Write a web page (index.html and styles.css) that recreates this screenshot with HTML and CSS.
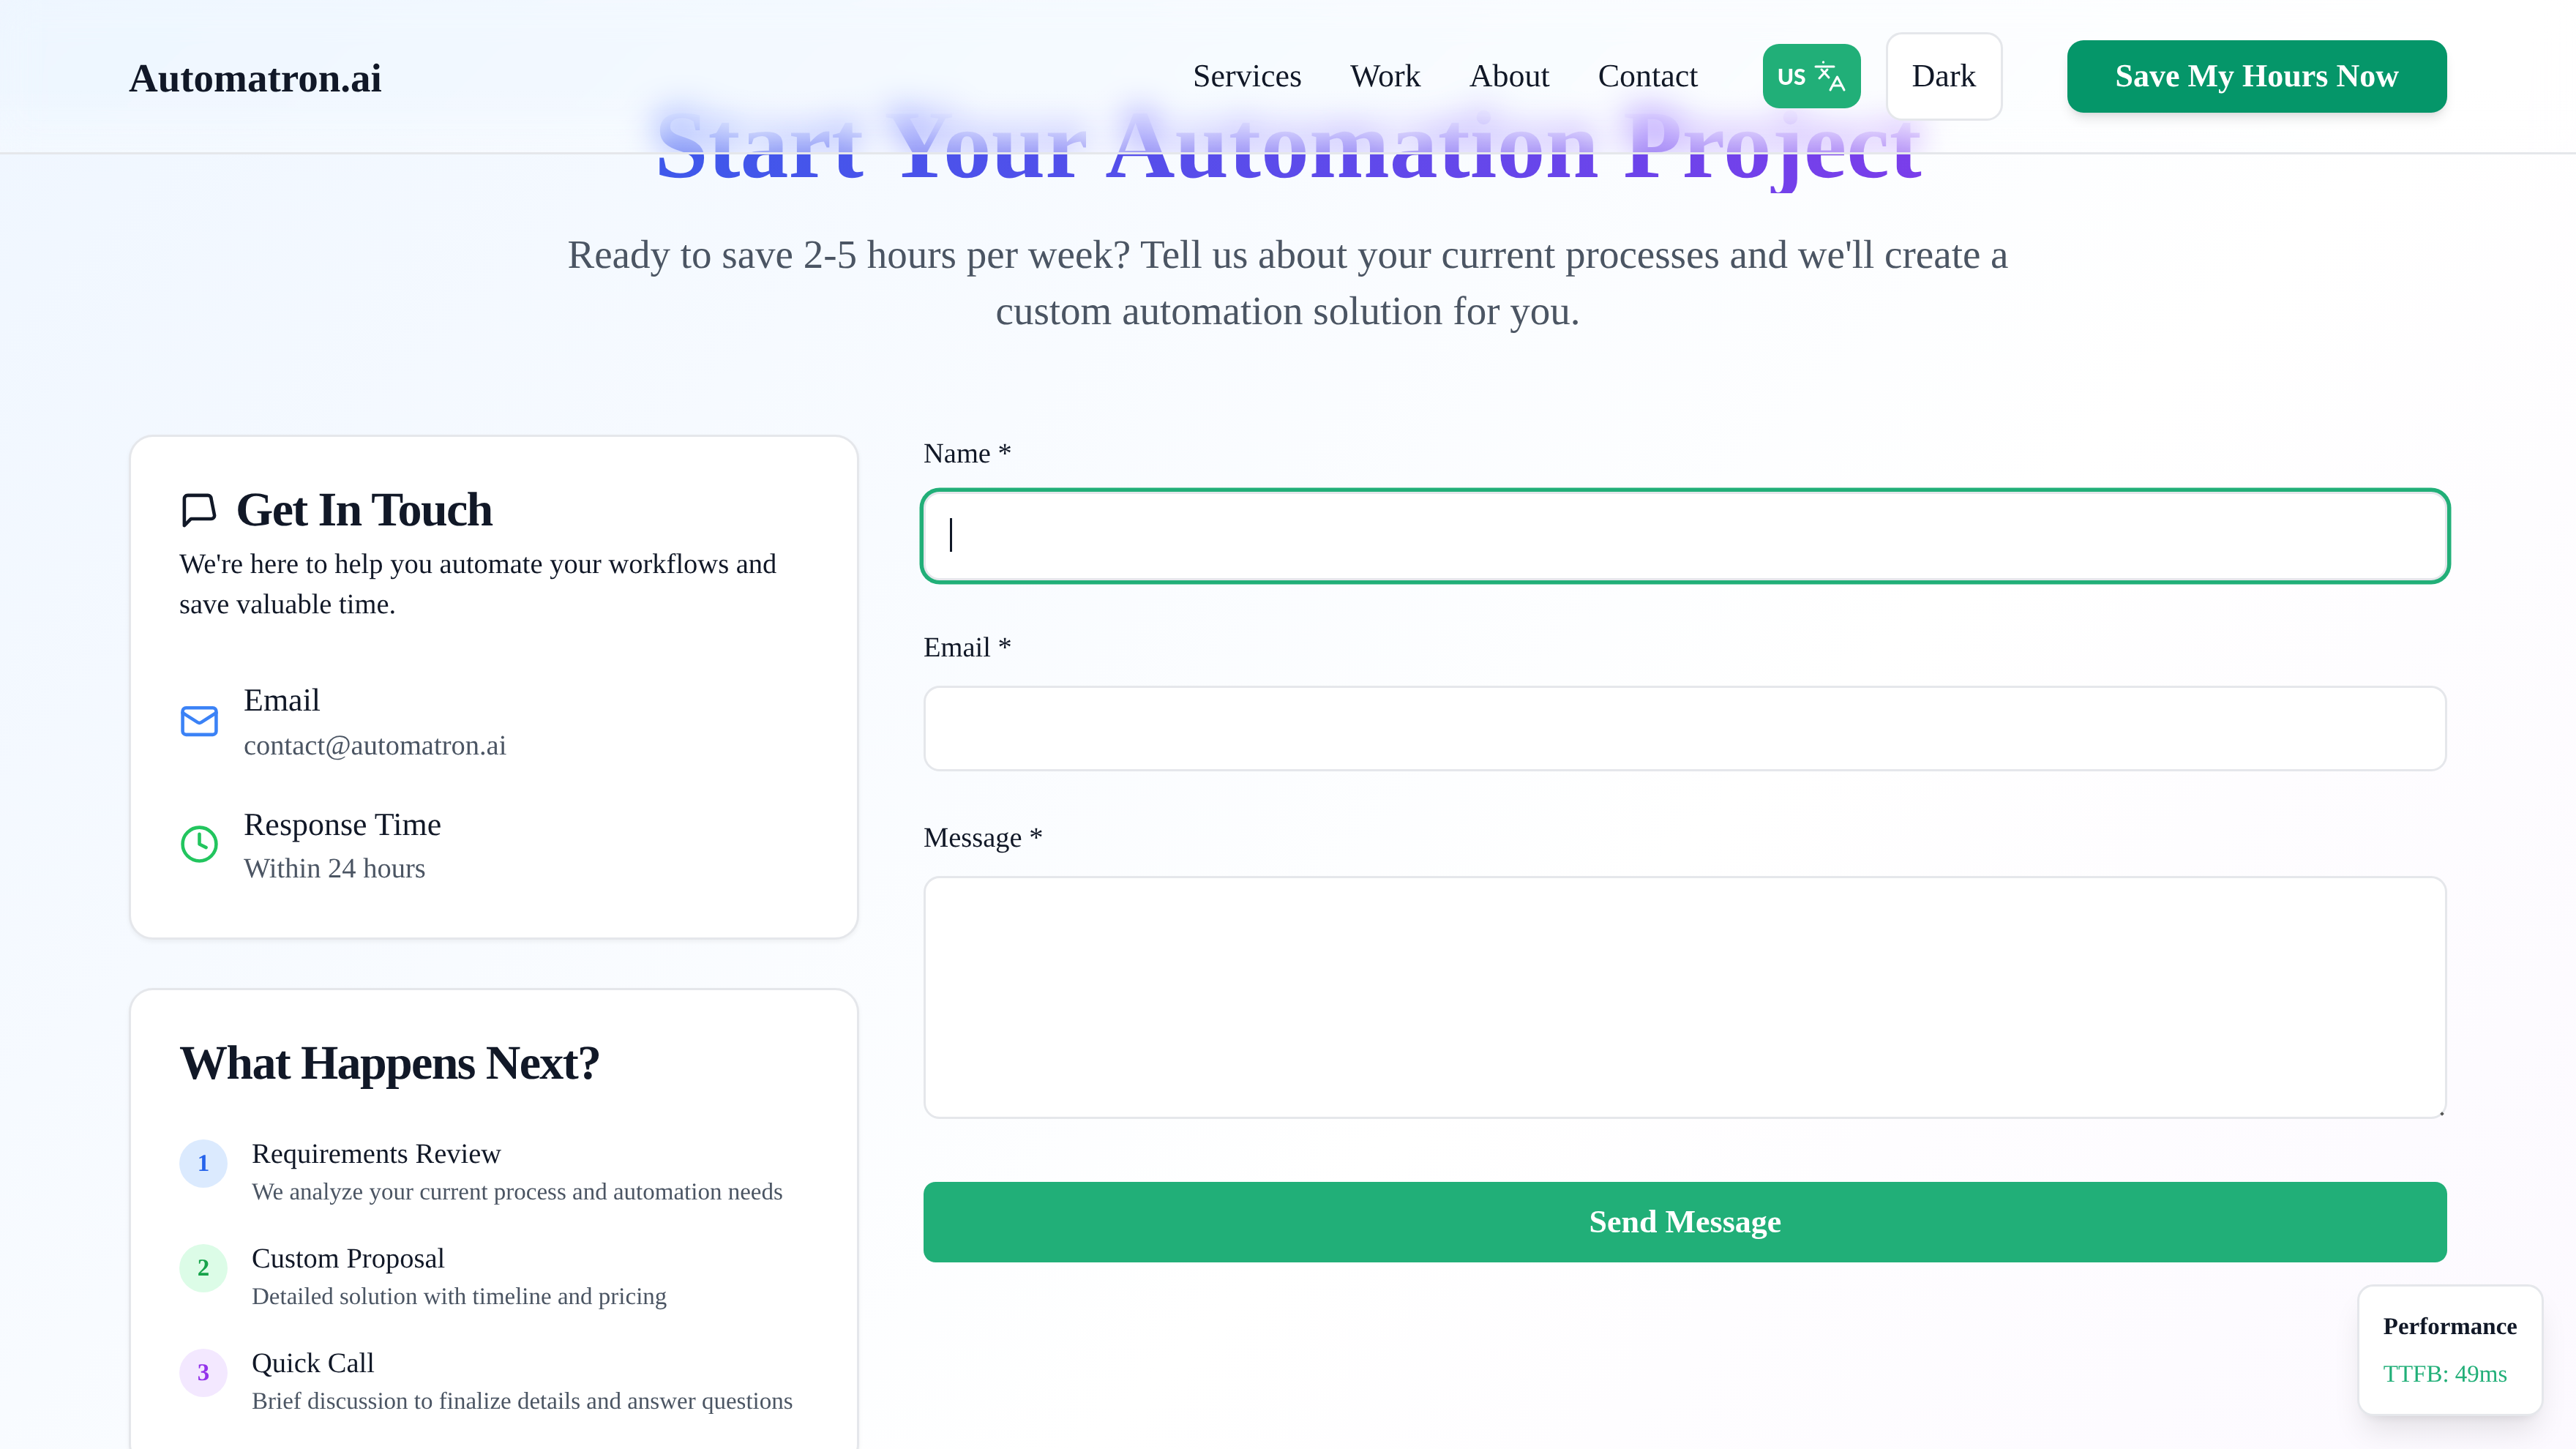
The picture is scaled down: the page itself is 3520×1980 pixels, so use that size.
FILE: index.html
```
<!DOCTYPE html>
<html lang="en">
<head>
<meta charset="utf-8">
<title>Contact - Automatron.ai</title>
<link rel="stylesheet" href="styles.css">
</head>
<body>

<header class="topbar">
  <a class="logo" href="#">Automatron.ai</a>
  <nav class="topnav">
    <a href="#">Services</a>
    <a href="#">Work</a>
    <a href="#">About</a>
    <a href="#">Contact</a>
  </nav>
  <button class="lang-btn" type="button">
    <span class="lang-code">US</span>
    <svg class="lang-icon" viewBox="8 7 44 44" fill="none" stroke="currentColor" stroke-width="3" stroke-linecap="round" stroke-linejoin="round">
      <circle cx="20.5" cy="10" r="1.7" fill="currentColor" stroke="none"/>
      <path d="M10 16h25"/>
      <path d="M18 20l10 11"/>
      <path d="M26 20L15 32"/>
      <path d="M30 48l9.500-18L49 48"/>
      <path d="M33.500 42h12"/>
    </svg>
  </button>
  <button class="theme-btn" type="button">Dark</button>
  <a class="cta-btn" href="#">Save My Hours Now</a>
</header>

<main class="page">
  <section class="hero">
    <h1>Start Your Automation Project</h1>
    <p>Ready to save 2-5 hours per week? Tell us about your current processes and we'll create a custom automation solution for you.</p>
  </section>

  <div class="contact-grid">
    <div class="side">
      <div class="card">
        <h3 class="card-title">
          <svg class="icon" viewBox="0 0 24 24"><path d="M21 15a2 2 0 0 1-2 2H7l-4 4V5a2 2 0 0 1 2-2h12a2 2 0 0 1 2 2z"/></svg>
          Get In Touch
        </h3>
        <p class="card-desc">We're here to help you automate your workflows and save valuable time.</p>
        <div class="info-list">
          <div class="info-row">
            <svg class="icon icon-blue" viewBox="0 0 24 24"><rect x="2" y="4" width="20" height="16" rx="2"/><path d="m22 7-8.970 5.700a1.940 1.940 0 0 1-2.060 0L2 7"/></svg>
            <div>
              <div class="info-name">Email</div>
              <a class="info-value info-link" href="#">contact@automatron.ai</a>
            </div>
          </div>
          <div class="info-row">
            <svg class="icon icon-green" viewBox="0 0 24 24"><circle cx="12" cy="12" r="10"/><path d="M12 6v6l4 2"/></svg>
            <div>
              <div class="info-name">Response Time</div>
              <div class="info-value">Within 24 hours</div>
            </div>
          </div>
        </div>
      </div>

      <div class="card">
        <h3 class="card-title">What Happens Next?</h3>
        <ol class="steps">
          <li class="step">
            <span class="step-num num-blue">1</span>
            <div>
              <div class="step-name">Requirements Review</div>
              <div class="step-desc">We analyze your current process and automation needs</div>
            </div>
          </li>
          <li class="step">
            <span class="step-num num-green">2</span>
            <div>
              <div class="step-name">Custom Proposal</div>
              <div class="step-desc">Detailed solution with timeline and pricing</div>
            </div>
          </li>
          <li class="step">
            <span class="step-num num-purple">3</span>
            <div>
              <div class="step-name">Quick Call</div>
              <div class="step-desc">Brief discussion to finalize details and answer questions</div>
            </div>
          </li>
        </ol>
      </div>
    </div>

    <form class="contact-form">
      <div class="field">
        <label for="name">Name *</label>
        <div class="control is-focused">
          <input id="name" type="text">
          <span class="caret"></span>
        </div>
      </div>
      <div class="field">
        <label for="email">Email *</label>
        <div class="control">
          <input id="email" type="email">
        </div>
      </div>
      <div class="field">
        <label for="message">Message *</label>
        <div class="control control-area">
          <textarea id="message"></textarea>
        </div>
      </div>
      <button class="send-btn" type="button">Send Message</button>
    </form>
  </div>
</main>

<aside class="perf">
  <div class="perf-title">Performance</div>
  <div class="perf-value">TTFB: 49ms</div>
</aside>

</body>
</html>
```

FILE: styles.css
```
* {
  box-sizing: border-box;
}

html, body {
  height: 100%;
  margin: 0;
  overflow: hidden;
}

body {
  font-family: "Liberation Serif", "Times New Roman", serif;
  font-size: 44px;
  line-height: 66px;
  color: #111827;
  text-rendering: geometricPrecision;
  background: linear-gradient(135deg, #eff6ff 0%, #fff 50%, #faf5ff 100%) no-repeat;
  background-size: 100% 3400px;
}

a {
  color: inherit;
  text-decoration: none;
}

button {
  font: inherit;
  color: inherit;
  cursor: pointer;
}

/* top bar */
.topbar {
  position: fixed;
  top: 0;
  left: 0;
  right: 0;
  z-index: 10;
  height: 211px;
  padding: 0 176px;
  display: flex;
  align-items: center;
  border-bottom: 3px solid #e5e7eb;
}

.topbar::before {
  content: "";
  position: absolute;
  inset: 0;
  z-index: -1;
  background: linear-gradient(to bottom, rgba(255, 255, 255, .05) 60%, rgba(255, 255, 255, .3) 100%);
  -webkit-backdrop-filter: blur(24px) saturate(1.25);
  backdrop-filter: blur(24px) saturate(1.25);
  -webkit-mask-image: linear-gradient(to bottom, #000 60%, rgba(0, 0, 0, .92) 100%);
  mask-image: linear-gradient(to bottom, #000 60%, rgba(0, 0, 0, .92) 100%);
}

.logo {
  font-size: 55px;
  font-weight: bold;
  line-height: 77px;
  margin-top: 4px;
  margin-right: auto;
}

.topnav {
  display: flex;
  gap: 66px;
  margin-right: 88px;
}

.lang-btn {
  width: 134px;
  height: 88px;
  padding: 0;
  border: 0;
  border-radius: 22px;
  background: #21af78;
  color: #fff;
  display: flex;
  align-items: center;
  justify-content: center;
  gap: 11px;
}

.lang-code {
  font-family: Lato, "Noto Sans", sans-serif;
  font-size: 30px;
  font-weight: 900;
  line-height: 44px;
}

.lang-icon {
  width: 44px;
  height: 44px;
}

.theme-btn {
  height: 121px;
  margin-left: 34px;
  margin-right: 88px;
  padding: 0 33px;
  border: 3px solid #e5e7eb;
  border-radius: 22px;
  background: #fff;
}

.cta-btn {
  height: 99px;
  padding: 0 66px;
  display: flex;
  align-items: center;
  border-radius: 22px;
  background: #059669;
  color: #fff;
  font-weight: bold;
  box-shadow: 0 11px 16px -3px rgba(0, 0, 0, .1), 0 5px 11px -5px rgba(0, 0, 0, .1);
}

/* page */
.page {
  padding: 0 176px;
}

.hero {
  padding-top: 132px;
  margin-bottom: 131px;
  text-align: center;
}

.hero h1 {
  margin: 0 0 45px;
  font-size: 132px;
  line-height: 132px;
  font-weight: bold;
  background: linear-gradient(to right, #2563eb, #9333ea);
  -webkit-background-clip: text;
  background-clip: text;
  color: transparent;
}

.hero p {
  max-width: 2112px;
  margin: 0 auto;
  font-size: 55px;
  line-height: 77px;
  color: #4b5563;
}

.contact-grid {
  display: grid;
  grid-template-columns: 998px 1fr;
  gap: 88px;
  align-items: start;
}

.side {
  display: flex;
  flex-direction: column;
  gap: 66px;
}

.card {
  padding: 66px;
  border: 3px solid #e5e7eb;
  border-radius: 33px;
  background: #fff;
  box-shadow: 0 3px 6px rgba(0, 0, 0, .05);
}

.card-title {
  display: flex;
  align-items: center;
  gap: 22px;
  margin: 1px 0 -1px;
  font-size: 66px;
  line-height: 66px;
  font-weight: bold;
  letter-spacing: -.025em;
}

.icon {
  width: 55px;
  height: 55px;
  flex: none;
  fill: none;
  stroke: currentColor;
  stroke-width: 2;
  stroke-linecap: round;
  stroke-linejoin: round;
}

.icon-blue {
  color: #3b82f6;
}

.icon-green {
  color: #22c55e;
}

.card-desc {
  margin: 15px 0 0;
  font-size: 38.500px;
  line-height: 55px;
}

.info-list {
  margin-top: 70px;
  display: flex;
  flex-direction: column;
  gap: 44px;
}

.info-row {
  display: flex;
  align-items: center;
  gap: 33px;
}

/* icons sit a little above the middle of their rows */
.info-row .icon {
  margin-top: -3px;
}

.info-value {
  font-size: 38.500px;
  line-height: 55px;
  color: #4b5563;
}

.info-link {
  display: block;
  padding: 2px 0 3px;
}

.steps {
  margin: 72px 0 0;
  padding: 0;
  list-style: none;
  display: flex;
  flex-direction: column;
  gap: 49.500px;
}

.step {
  display: flex;
  align-items: flex-start;
  gap: 33px;
}

.step-num {
  width: 66px;
  height: 66px;
  flex: none;
  border-radius: 50%;
  display: flex;
  align-items: center;
  justify-content: center;
  font-size: 33px;
  line-height: 44px;
  font-weight: bold;
}

.num-blue {
  background: #dbeafe;
  color: #2563eb;
}

.num-green {
  background: #dcfce7;
  color: #16a34a;
}

.num-purple {
  background: #f3e8ff;
  color: #9333ea;
}

.step-name {
  font-size: 38.500px;
  line-height: 40px;
}

.step-desc {
  margin-top: 9.500px;
  font-size: 33px;
  line-height: 44px;
  color: #4b5563;
}

/* form */
.contact-form {
  margin-top: -1px;
  display: flex;
  flex-direction: column;
  gap: 64.500px;
}

.field label {
  display: block;
  margin-bottom: 24px;
  font-size: 38.500px;
  line-height: 55px;
}

.control {
  position: relative;
}

.control input,
.control textarea {
  display: block;
  width: 100%;
  height: 117px;
  padding: 0 33px;
  border: 3px solid #e5e7eb;
  border-radius: 22px;
  background: #fff;
  font: inherit;
  outline: none;
  resize: none;
}

.control textarea {
  height: 332px;
}

.is-focused input {
  height: 121px;
  box-shadow: 0 0 0 5.500px #21af78;
}

.caret {
  position: absolute;
  left: 36px;
  top: 36px;
  width: 3px;
  height: 46px;
  background: #111827;
}

/* little resize grip of the textarea */
.control-area::after {
  content: "";
  position: absolute;
  right: 5px;
  bottom: 5px;
  width: 4px;
  height: 4px;
  background: #555;
  transform: rotate(45deg);
}

.send-btn {
  height: 110px;
  margin-top: 21.500px;
  border: 0;
  border-radius: 16.500px;
  background: #21af78;
  color: #fff;
  font-weight: bold;
}

/* floating widget */
.perf {
  position: fixed;
  right: 44px;
  bottom: 45px;
  z-index: 20;
  padding: 33px 33px 32px;
  border: 3px solid #e5e7eb;
  border-radius: 22px;
  background: #fff;
  font-size: 33px;
  line-height: 44px;
  box-shadow: 0 27px 41px -8px rgba(0, 0, 0, .1), 0 11px 16px -11px rgba(0, 0, 0, .1);
}

.perf-title {
  font-weight: bold;
}

.perf-value {
  margin-top: 21px;
  color: #21af78;
}
```
